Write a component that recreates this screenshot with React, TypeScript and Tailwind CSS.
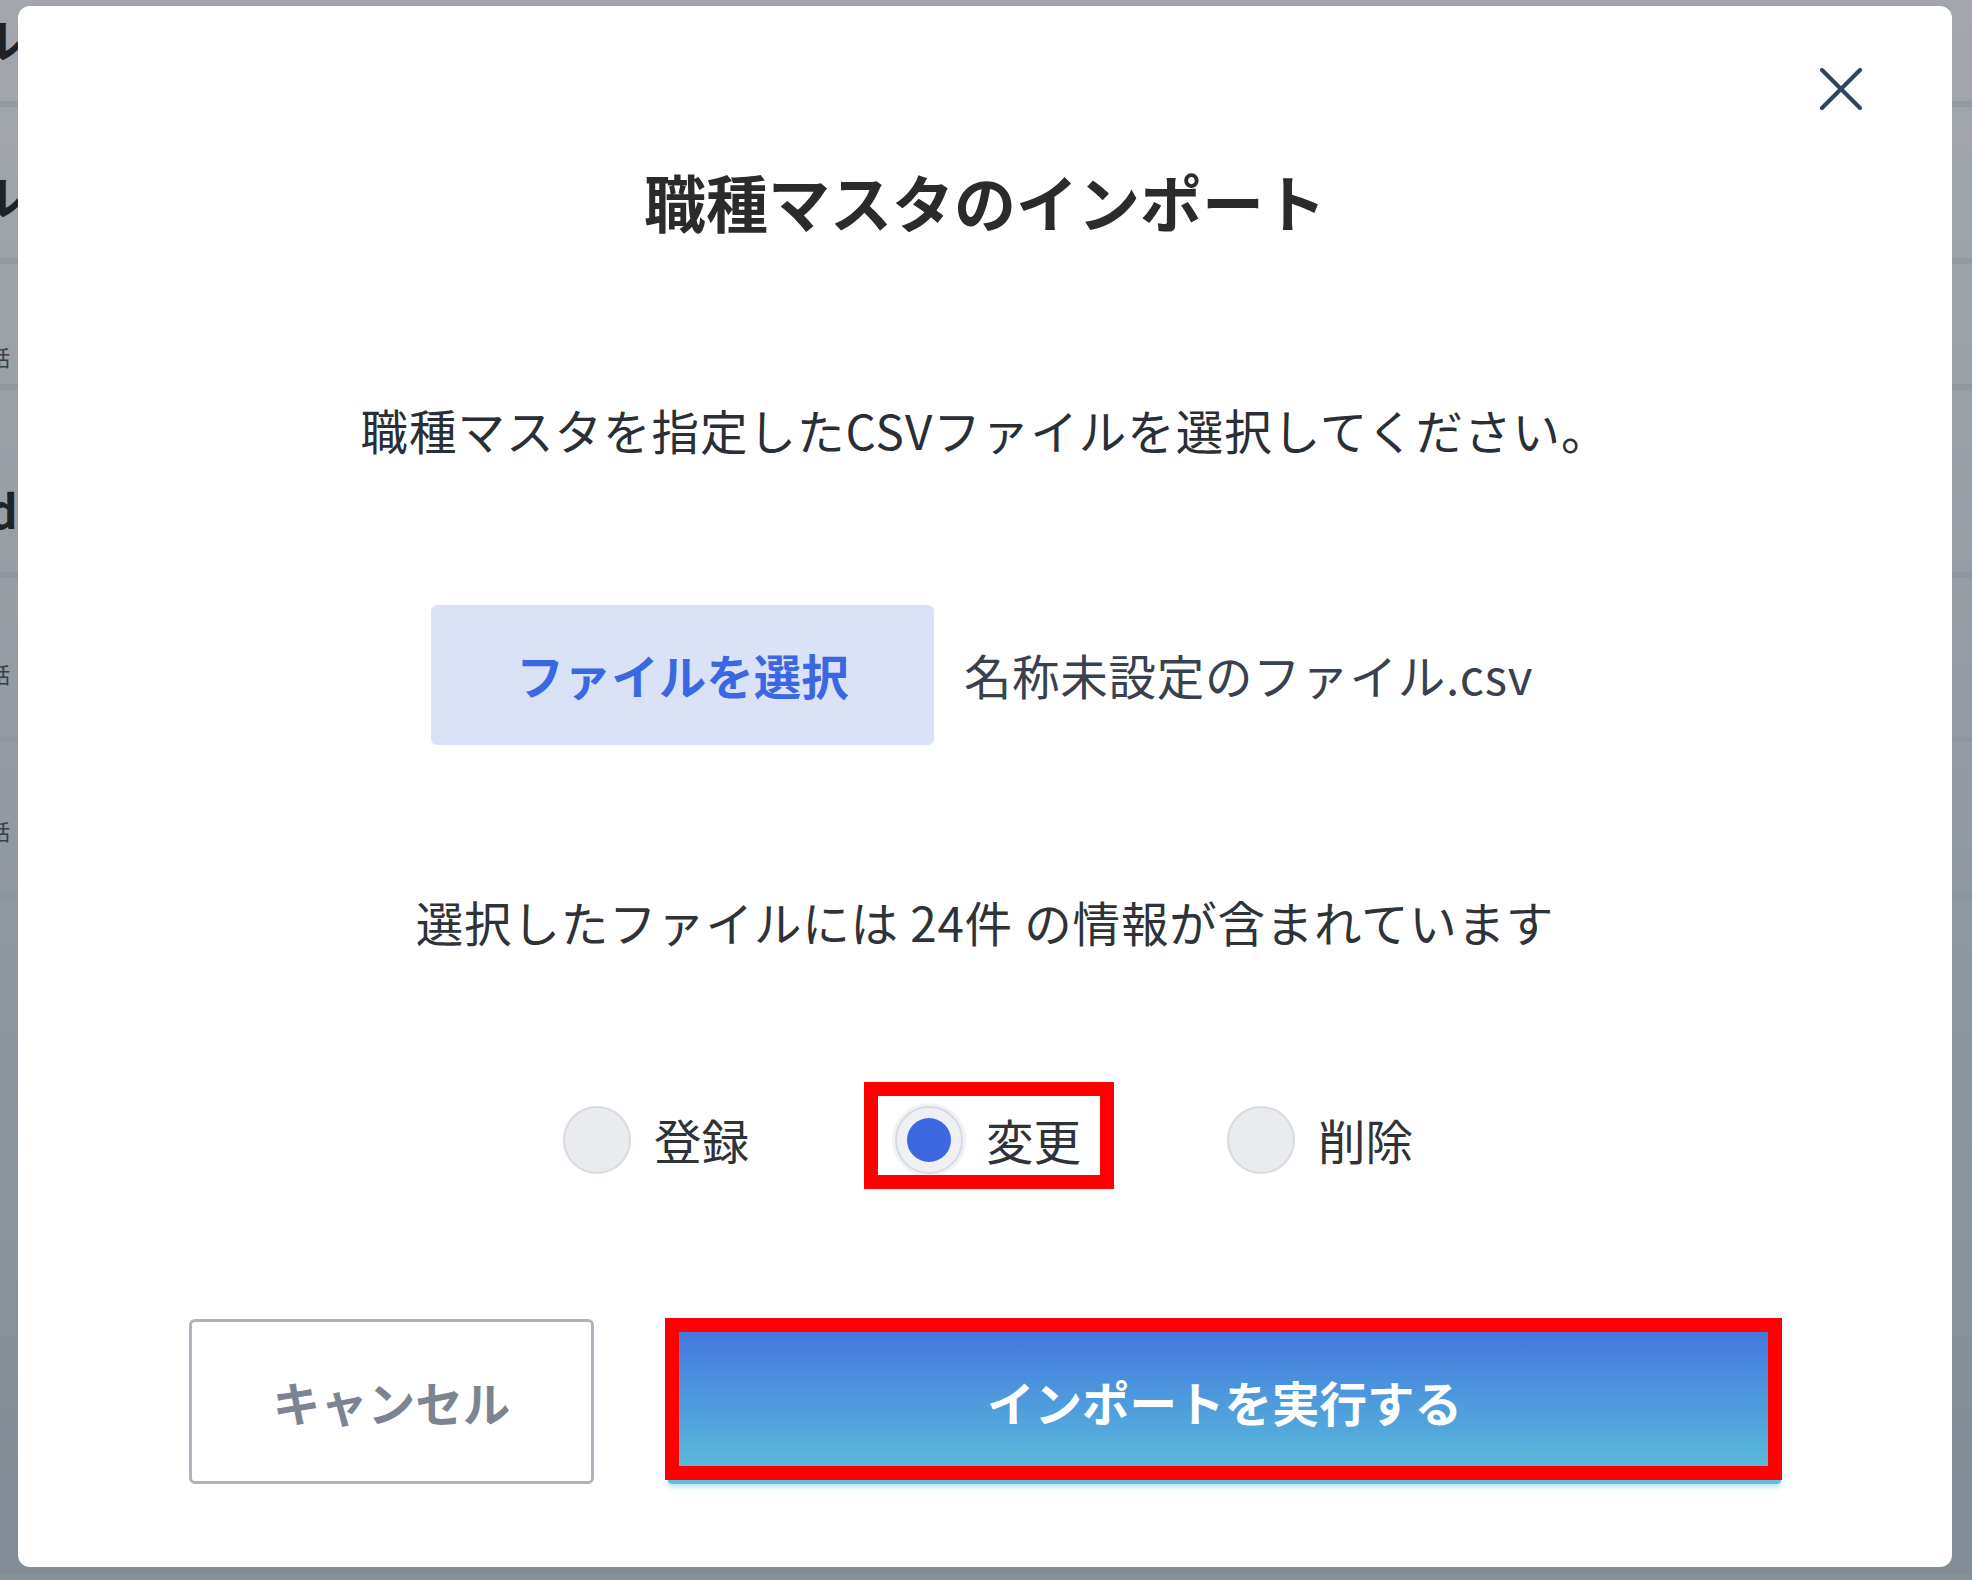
import React from "react";

const jp = "font-['Noto_Sans_CJK_JP','Noto_Sans',sans-serif]";

const radios = [
  { label: "登録", checked: false },
  { label: "変更", checked: true },
  { label: "削除", checked: false },
];

// rows of the page behind the dim overlay; only a sliver shows at the edges
const bgRows = [
  { h: "h-[107px]", pt: "pt-[15px]", text: "ル", kind: "big" },
  { h: "h-[157px]", pt: "pt-[65px]", text: "ル", kind: "big" },
  { h: "h-[126px]", pt: "pt-[79px]", text: "話", kind: "small" },
  { h: "h-[188px]", pt: "pt-[96px]", text: "d", kind: "latin" },
  { h: "h-[164px]", pt: "pt-[82px]", text: "話", kind: "small" },
  { h: "h-[157px]", pt: "pt-[75px]", text: "話", kind: "small" },
  { h: "h-[157px]", pt: "pt-0", text: "", kind: "small" },
  { h: "h-[524px]", pt: "pt-0", text: "", kind: "small" },
];

const bgText: Record<string, string> = {
  big: "-ml-[24px] text-[46px] leading-[46px] font-bold text-[#1f2328]",
  latin: "-ml-[12px] text-[46px] leading-[46px] font-bold text-[#1f2328]",
  small: "-ml-[12px] text-[22px] leading-[26px] text-[#3a4048]",
};

function RadioOption({ label, checked }: { label: string; checked: boolean }) {
  return (
    <label className="relative flex items-center gap-[23px] cursor-pointer">
      <span
        className={`flex h-[68px] w-[68px] items-center justify-center rounded-full border-2 border-[#d7dbe1] ${
          checked ? "bg-[#eef0f3] shadow-[0_0_0_3px_#f1f2f5]" : "bg-[#e9ebee]"
        }`}
      >
        {checked && <span className="h-[44px] w-[44px] rounded-full bg-[#3c67e0]" />}
      </span>
      <span className="text-[47.5px] leading-[64px] text-[#2f3338]">{label}</span>
      {checked && (
        <span className="pointer-events-none absolute -left-[31px] -right-[33px] -top-[24px] -bottom-[15px] border-[14px] border-[#ff0000]" />
      )}
    </label>
  );
}

export default function App() {
  return (
    <div className={`relative h-[1580px] w-full overflow-hidden bg-gradient-to-b from-[#a3a7ad] via-[#939aa1] to-[#808d96] ${jp}`}>
      {/* page behind the modal */}
      <div className="flex flex-col">
        {bgRows.map((r, i) => (
          <div key={i} className={`${r.h} ${r.pt} flex items-start border-b-[6px] border-[#8a939b]/60`}>
            {r.text && <span className={bgText[r.kind]}>{r.text}</span>}
          </div>
        ))}
      </div>

      {/* modal */}
      <div className="absolute left-[18px] top-[6px] right-[20px] bottom-[13px] rounded-[12px] bg-white">
        <button className="absolute right-[90px] top-[62px] text-[#2e4461]" aria-label="close">
          <svg width="42" height="42" viewBox="0 0 42 42" fill="none" stroke="currentColor" strokeWidth="4" strokeLinecap="round">
            <path d="M2 2 40 40" />
            <path d="M40 2 2 40" />
          </svg>
        </button>

        <div className="flex flex-col items-center pt-[155px]">
          <h1 className="text-[62px] font-bold leading-[80px] text-[#2b2b2b]">職種マスタのインポート</h1>

          <p className="mt-[157px] text-[47.5px] leading-[64px] tracking-[1px] text-[#2a2e35]">
            職種マスタを指定したCSVファイルを選択してください。
          </p>

          <div className="mt-[143px] -ml-[6px] flex items-center gap-[30px]">
            <button className="flex h-[140px] w-[503px] items-center justify-center rounded-[6px] bg-[#dae2f8] text-[47.5px] font-bold text-[#3b68e0]">
              ファイルを選択
            </button>
            <span className="text-[47.5px] leading-[64px] tracking-[0.7px] text-[#3a414e]">名称未設定のファイル.csv</span>
          </div>

          <p className="mt-[145px] text-[47.5px] leading-[64px] tracking-[0.8px] text-[#2f3338]">
            選択したファイルには 24件 の情報が含まれています
          </p>

          <div className="mt-[152px] ml-[6px] flex items-center gap-[146px]">
            {radios.map((r) => (
              <RadioOption key={r.label} label={r.label} checked={r.checked} />
            ))}
          </div>

          <div className="mt-[145px] flex w-full items-center gap-[74px] px-[171px]">
            <button className="flex h-[165px] w-[405px] items-center justify-center rounded-[6px] border-[3px] border-[#aeb4bd] bg-white text-[47.5px] font-bold text-[#7c8491]">
              キャンセル
            </button>
            <div className="relative flex-1">
              <button className="flex h-[165px] w-full items-center justify-center rounded-[4px] bg-gradient-to-b from-[#4470df] to-[#5dc2d8] text-[47.5px] font-bold text-white shadow-[0_3px_4px_rgba(92,196,222,0.45)]">
                インポートを実行する
              </button>
              <span className="pointer-events-none absolute -left-[3px] -right-[1px] -top-[1px] bottom-[4px] border-[14px] border-[#ff0000]" />
            </div>
          </div>
        </div>
      </div>
    </div>
  );
}
